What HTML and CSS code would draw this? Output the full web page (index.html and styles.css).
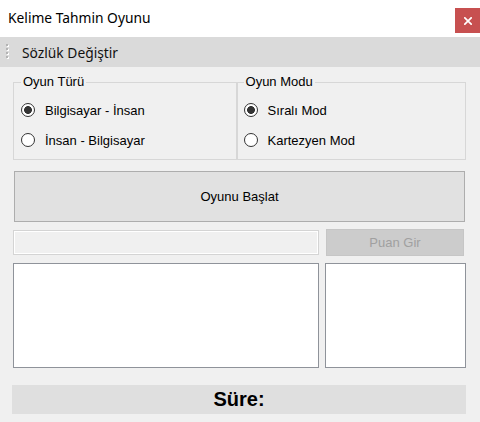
FILE: index.html
```html
<!DOCTYPE html>
<html lang="tr">
<head>
<meta charset="utf-8">
<title>Kelime Tahmin Oyunu</title>
<link rel="stylesheet" href="styles.css">
</head>
<body>
<div class="window">
  <div class="titlebar">
    <span class="title">Kelime Tahmin Oyunu</span>
    <button class="close" aria-label="Kapat">
      <svg width="8" height="8" viewBox="0 0 8 8"><path d="M0.8 0.8 L7.2 7.2 M7.2 0.8 L0.8 7.2" stroke="#fff" stroke-width="1.7" stroke-linecap="square"/></svg>
    </button>
  </div>
  <div class="menubar">
    <span class="grip">
      <svg width="3" height="16" viewBox="0 0 3 16">
        <rect x="1" y="1" width="2" height="2" fill="#fff"/><rect x="0" y="0" width="2" height="2" fill="#b4b4b4"/>
        <rect x="1" y="5" width="2" height="2" fill="#fff"/><rect x="0" y="4" width="2" height="2" fill="#b4b4b4"/>
        <rect x="1" y="9" width="2" height="2" fill="#fff"/><rect x="0" y="8" width="2" height="2" fill="#b4b4b4"/>
        <rect x="1" y="13" width="2" height="2" fill="#fff"/><rect x="0" y="12" width="2" height="2" fill="#b4b4b4"/>
      </svg>
    </span>
    <span class="menu-item">Sözlük Değiştir</span>
  </div>
  <div class="content">
    <div class="groups">
      <fieldset class="group group-type">
        <legend>Oyun Türü</legend>
        <div class="options">
          <div class="radio"><span class="dot checked"></span><span class="label">Bilgisayar - İnsan</span></div>
          <div class="radio"><span class="dot"></span><span class="label">İnsan - Bilgisayar</span></div>
        </div>
      </fieldset>
      <fieldset class="group group-mode">
        <legend>Oyun Modu</legend>
        <div class="options">
          <div class="radio"><span class="dot checked"></span><span class="label">Sıralı Mod</span></div>
          <div class="radio"><span class="dot"></span><span class="label">Kartezyen Mod</span></div>
        </div>
      </fieldset>
    </div>
    <button class="start">Oyunu Başlat</button>
    <div class="entry-row">
      <div class="textbox"></div>
      <button class="score" disabled>Puan Gir</button>
    </div>
    <div class="lists">
      <div class="listbox wide"></div>
      <div class="listbox narrow"></div>
    </div>
    <div class="timer">Süre:</div>
  </div>
</div>
</body>
</html>
```
FILE: styles.css
```css
html, body {
  margin: 0;
  padding: 0;
  overflow: hidden;
}
body {
  width: 480px;
  height: 422px;
  background: #f0f0f0;
  font-family: "Liberation Sans", Arial, sans-serif;
  font-size: 13px;
  color: #000;
}
.titlebar {
  height: 37px;
  background: #fff;
  display: flex;
  align-items: flex-start;
}
.title {
  font-family: "Noto Sans", "Open Sans", sans-serif;
  font-size: 13.8px;
  line-height: 36px;
  padding-left: 8px;
  color: #000;
}
.close {
  margin-left: auto;
  margin-top: 8px;
  width: 25px;
  height: 25px;
  padding: 0;
  border: none;
  background: #c75050;
  display: flex;
  align-items: center;
  justify-content: center;
}
.menubar {
  height: 30px;
  background: #dadada;
  display: flex;
  align-items: center;
}
.grip {
  display: flex;
  padding-left: 6px;
  width: 16px;
}
.menu-item {
  font-family: "Noto Sans", "Open Sans", sans-serif;
  font-size: 13.8px;
  color: #111;
}
.content {
  padding: 7px 14px 0 13px;
}
.groups {
  display: flex;
}
.group {
  box-sizing: border-box;
  margin: 0;
  padding: 0 6px 4px 7px;
  border: 1px solid #d7d7d7;
  min-inline-size: 0;
}
.group-type {
  width: 224px;
}
.group-mode {
  width: 230px;
  padding-left: 6px;
}
.group legend {
  padding: 0 2px;
  line-height: 16px;
  font-size: 13px;
}
.options {
  padding-top: 5px;
}
.radio {
  height: 30px;
  display: flex;
  align-items: center;
}
.dot {
  box-sizing: border-box;
  width: 14px;
  height: 14px;
  border: 1px solid #333;
  border-radius: 50%;
  background: #fff;
}
.dot.checked {
  background: radial-gradient(circle, #333 0 3.6px, #fff 4.2px);
}
.label {
  margin-left: 10px;
}
.start {
  display: block;
  margin: 11px 0 0 1px;
  width: 451px;
  height: 51px;
  background: #e1e1e1;
  border: 1px solid #adadad;
  font-family: "Liberation Sans", Arial, sans-serif;
  font-size: 13px;
  color: #000;
  padding: 0;
}
.entry-row {
  margin-top: 7px;
  height: 27px;
  display: flex;
  align-items: center;
}
.textbox {
  box-sizing: border-box;
  width: 306px;
  height: 25px;
  background: #f0f0f0;
  border: 1px solid #d4d4d4;
  box-shadow: inset 0 0 0 1px #fff;
}
.score {
  margin-left: 7px;
  width: 138px;
  height: 27px;
  padding: 0;
  background: #cccccc;
  border: 1px solid #c6c6c6;
  color: #a0a0a0;
  font-family: "Liberation Sans", Arial, sans-serif;
  font-size: 13px;
}
.lists {
  margin-top: 7px;
  display: flex;
  gap: 6px;
}
.listbox {
  box-sizing: border-box;
  height: 105px;
  background: #fff;
  border: 1px solid #8f939a;
}
.listbox.wide {
  width: 306px;
}
.listbox.narrow {
  width: 141px;
}
.timer {
  margin: 17px 0 0 -1px;
  width: 454px;
  height: 29px;
  background: #dfdfdf;
  font-weight: bold;
  font-size: 20px;
  line-height: 29px;
  text-align: center;
  color: #000;
}
```
